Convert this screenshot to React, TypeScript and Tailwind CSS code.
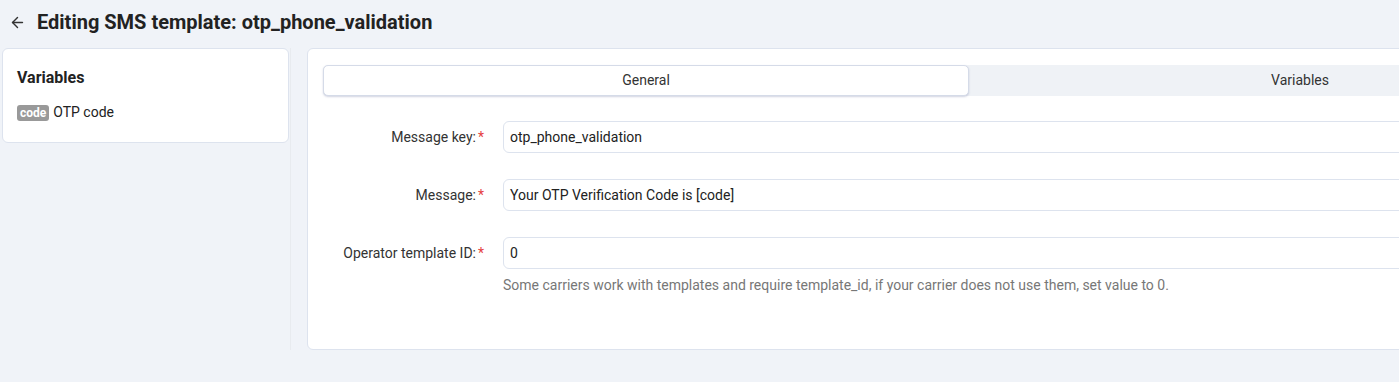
import { ArrowLeft } from 'lucide-react'

const fields = [
  { label: 'Message key:', value: 'otp_phone_validation' },
  { label: 'Message:', value: 'Your OTP Verification Code is [code]' },
  { label: 'Operator template ID:', value: '0', help: 'Some carriers work with templates and require template_id, if your carrier does not use them, set value to 0.' },
]

export default function App() {
  return (
    <div className="w-full h-[382px] overflow-hidden bg-[#f0f3f8] text-[#222] font-['Roboto',sans-serif]">
      {/* Header */}
      <header className="h-[48px] flex items-center pl-[9px] pb-[4px]">
        <ArrowLeft className="h-[17px] w-[17px] text-[#333]" strokeWidth={2} />
        <h1 className="ml-[11px] text-[20px] font-bold text-[#222]">
          Editing SMS template: otp_phone_validation
        </h1>
      </header>

      <div className="flex">
        {/* Sidebar */}
        <aside className="w-[291px] shrink-0 h-[302px] border-r border-[#e8ebef] pl-[2px] pr-[1px]">
          <div className="bg-white rounded-[6px] border border-[#dde3ee] h-[95px] px-[14px] pt-[17px]">
            <h2 className="text-[16px] font-bold text-[#222]">Variables</h2>
            <div className="mt-[12px] flex items-center gap-[4px] text-[14px]">
              <span className="rounded-[3px] bg-[#999] px-[3px] text-[12px] leading-[16px] font-bold text-white">code</span>
              <span>OTP code</span>
            </div>
          </div>
        </aside>

        {/* Main */}
        <main className="flex-1 min-w-0 pl-[16px]">
          <div className="w-[1340px] h-[302px] bg-white rounded-[6px] border border-[#dde3ee] px-[15px] pt-[16px]">
            {/* Tabs */}
            <div className="flex h-[31px] rounded-[5px] bg-[#eff2f6]">
              <button className="w-[648px] rounded-[5px] bg-white border border-[#d5dbe8] shadow-[0_1px_2px_rgba(120,130,170,0.35)] text-[14px] text-[#333]">
                General
              </button>
              <button className="w-[664px] text-[14px] text-[#333]">Variables</button>
            </div>

            {/* Form */}
            <div className="mt-[25px] flex flex-col gap-[26px]">
              {fields.map(f => (
                <div key={f.label} className="flex">
                  <label className="w-[161px] shrink-0 h-[32px] flex items-center justify-end text-[14px] text-[#333]">
                    {f.label}
                    <span className="text-[#e53e3e] ml-[2px]">*</span>
                  </label>
                  <div className="ml-[19px] flex-1">
                    <div className="h-[32px] rounded-[6px] border border-[#dde3ee] flex items-center px-[6px] text-[14px] text-[#222]">
                      {f.value}
                    </div>
                    {f.help && (
                      <p className="mt-[7px] text-[14px] text-[#777] leading-[18px]">{f.help}</p>
                    )}
                  </div>
                </div>
              ))}
            </div>
          </div>
        </main>
      </div>
    </div>
  )
}
